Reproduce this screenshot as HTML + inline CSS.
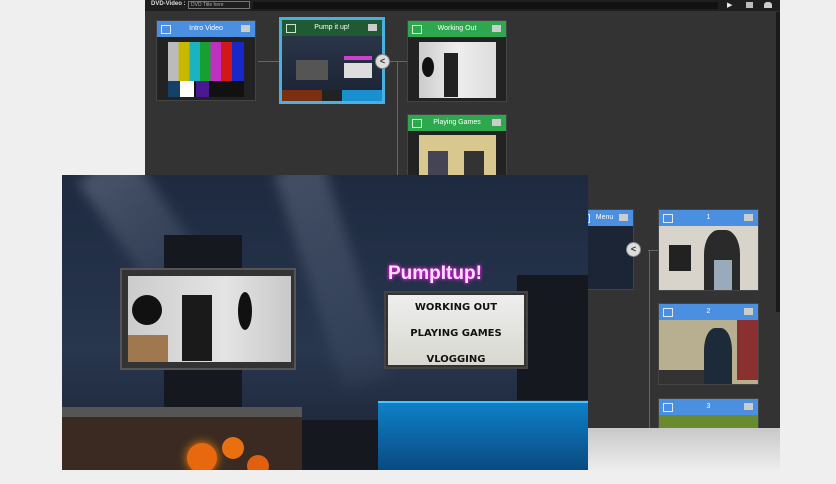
<!DOCTYPE html><html><head><style>
*{margin:0;padding:0;box-sizing:border-box}
body{width:836px;height:484px;background:#efefef;position:relative;overflow:hidden;font-family:"Liberation Sans",sans-serif}
.a{position:absolute}
.node{position:absolute;background:#222;border:1px solid #444}
.hd{height:16px;color:#fff;font-size:7px;text-align:center;line-height:16px;position:relative}
.hd:before{content:"";position:absolute;left:4px;top:4px;width:8px;height:7px;border:1px solid #fff;opacity:.8}
.hd:after{content:"";position:absolute;right:5px;top:4px;width:9px;height:7px;background:#ccc}
.b{background:#4a8fe0}.g{background:#2ea84e}.dg{background:#1f5a33}
.chev{position:absolute;width:15px;height:15px;border-radius:50%;background:#ddd;border:1px solid #888;font-size:9px;font-weight:bold;text-align:center;line-height:13px;color:#333}
</style></head><body>
<div class="a" style="left:145px;top:0;width:635px;height:428px;background:#333"></div>
<div class="a" style="left:145px;top:0;width:635px;height:11px;background:#1e1e1e"></div>
<div class="a" style="left:151px;top:1px;color:#ddd;font-size:6px;font-weight:bold">DVD-Video :</div>
<div class="a" style="left:188px;top:1px;width:62px;height:8px;border:1px solid #777;color:#aaa;font-size:5px;padding-left:2px;line-height:7px">DVD Title here</div>
<div class="a" style="left:253px;top:2px;width:465px;height:7px;background:#111"></div>
<div class="a" style="left:727px;top:1px;color:#eee;font-size:7px">▶</div>
<div class="a" style="left:746px;top:2px;width:7px;height:6px;background:#bbb"></div>
<div class="a" style="left:764px;top:2px;width:8px;height:6px;background:#ccc;border-radius:3px 3px 0 0"></div>
<div class="a" style="left:776px;top:12px;width:4px;height:300px;background:#1a1a1a"></div>
<div class="a" style="left:258px;top:61px;width:22px;height:1px;background:#666"></div>
<div class="a" style="left:388px;top:61px;width:20px;height:1px;background:#666"></div>
<div class="a" style="left:397px;top:61px;width:1px;height:115px;background:#666"></div>
<div class="a" style="left:648px;top:250px;width:10px;height:1px;background:#666"></div>
<div class="a" style="left:649px;top:250px;width:1px;height:178px;background:#666"></div>
<div class="node" style="left:156px;top:20px;width:100px;height:81px"><div class="hd b">Intro Video</div>
<div class="a" style="left:11px;top:21px;width:76px;height:55px;background:linear-gradient(90deg,#bbb 0 14%,#c8b800 14% 28%,#1ab4c0 28% 42%,#16a030 42% 56%,#c030c0 56% 70%,#d01818 70% 84%,#1828c8 84%)"></div>
<div class="a" style="left:11px;top:60px;width:76px;height:16px;background:#111"></div>
<div class="a" style="left:23px;top:60px;width:14px;height:16px;background:#fff"></div>
<div class="a" style="left:11px;top:60px;width:12px;height:16px;background:#14406a"></div>
<div class="a" style="left:39px;top:60px;width:13px;height:16px;background:#4a1890"></div></div>
<div class="node" style="left:279px;top:17px;width:106px;height:87px;border:3px solid #4ab0e0"><div class="hd dg">Pump it up!</div>
<div class="a" style="left:0;top:16px;width:100px;height:65px;background:linear-gradient(#2a3548,#1b2333)"></div>
<div class="a" style="left:14px;top:40px;width:32px;height:20px;background:#555"></div>
<div class="a" style="left:62px;top:36px;width:28px;height:4px;background:#d040d0"></div>
<div class="a" style="left:62px;top:43px;width:28px;height:15px;background:#ddd"></div>
<div class="a" style="left:0;top:70px;width:100px;height:11px;background:linear-gradient(90deg,#7a3010 0 40%,#222 40% 60%,#1890d0 60%)"></div></div>
<div class="chev" style="left:375px;top:54px">&lt;</div>
<div class="node" style="left:407px;top:20px;width:100px;height:82px"><div class="hd g">Working Out</div>
<div class="a" style="left:11px;top:21px;width:77px;height:56px;background:linear-gradient(90deg,#ccc,#eee 50%,#ddd)"></div>
<div class="a" style="left:36px;top:32px;width:14px;height:44px;background:#222"></div>
<div class="a" style="left:14px;top:36px;width:12px;height:20px;background:#111;border-radius:50%"></div></div>
<div class="node" style="left:407px;top:114px;width:100px;height:62px"><div class="hd g">Playing Games</div>
<div class="a" style="left:11px;top:20px;width:77px;height:42px;background:#d8c890"></div>
<div class="a" style="left:20px;top:36px;width:20px;height:26px;background:#445"></div>
<div class="a" style="left:56px;top:36px;width:20px;height:26px;background:#333"></div></div>
<div class="node" style="left:575px;top:209px;width:59px;height:81px"><div class="hd b">Menu</div>
<div class="a" style="left:0;top:16px;width:57px;height:63px;background:#1c2535"></div></div>
<div class="chev" style="left:626px;top:242px">&lt;</div>
<div class="node" style="left:658px;top:209px;width:101px;height:82px"><div class="hd b">1</div>
<div class="a" style="left:0;top:16px;width:99px;height:64px;background:#d8d4cc"></div>
<div class="a" style="left:10px;top:35px;width:22px;height:26px;background:#222"></div>
<div class="a" style="left:45px;top:20px;width:36px;height:60px;background:#2a2a2a;border-radius:40% 40% 0 0"></div>
<div class="a" style="left:55px;top:50px;width:18px;height:30px;background:#9ab"></div></div>
<div class="node" style="left:658px;top:303px;width:101px;height:82px"><div class="hd b">2</div>
<div class="a" style="left:0;top:16px;width:99px;height:64px;background:#b8ae90"></div>
<div class="a" style="left:78px;top:16px;width:21px;height:60px;background:#8a3030"></div>
<div class="a" style="left:0;top:66px;width:50px;height:14px;background:#333"></div>
<div class="a" style="left:45px;top:24px;width:28px;height:56px;background:#1c2a3a;border-radius:40% 40% 0 0"></div></div>
<div class="node" style="left:658px;top:398px;width:101px;height:30px"><div class="hd b">3</div>
<div class="a" style="left:0;top:16px;width:99px;height:14px;background:#6a8a30"></div></div>
<div class="a" style="left:588px;top:428px;width:192px;height:44px;background:linear-gradient(#c8c8c8,#efefef)"></div>
<div class="a" style="left:62px;top:175px;width:526px;height:295px;background:linear-gradient(#1d2a40,#28364e 60%,#1a2232);overflow:hidden">
<div class="a" style="left:10px;top:-10px;width:60px;height:150px;background:linear-gradient(rgba(200,210,230,.25),rgba(200,210,230,.05));filter:blur(6px);transform:rotate(-35deg);transform-origin:top"></div>
<div class="a" style="left:210px;top:-10px;width:50px;height:230px;background:linear-gradient(rgba(200,210,230,.22),rgba(200,210,230,.04));filter:blur(6px);transform:rotate(-18deg);transform-origin:top"></div>
<div class="a" style="left:102px;top:60px;width:78px;height:180px;background:#15181e"></div>
<div class="a" style="left:58px;top:93px;width:176px;height:102px;background:#333;border:2px solid #555"></div>
<div class="a" style="left:66px;top:101px;width:163px;height:86px;background:linear-gradient(90deg,#ccc,#e4e4e4 60%,#c8c8c8)"></div>
<div class="a" style="left:120px;top:120px;width:30px;height:66px;background:#1a1a1a"></div>
<div class="a" style="left:70px;top:120px;width:30px;height:30px;border-radius:50%;background:#111"></div>
<div class="a" style="left:176px;top:117px;width:14px;height:38px;border-radius:50%;background:#111"></div>
<div class="a" style="left:66px;top:160px;width:40px;height:27px;background:#a07850"></div>
<div class="a" style="left:0;top:240px;width:240px;height:55px;background:#3a2a22"></div>
<div class="a" style="left:0;top:232px;width:240px;height:10px;background:#555"></div>
<div class="a" style="left:125px;top:268px;width:30px;height:30px;border-radius:50%;background:#e86810;box-shadow:0 0 10px #f80"></div>
<div class="a" style="left:160px;top:262px;width:22px;height:22px;border-radius:50%;background:#e87010"></div>
<div class="a" style="left:185px;top:280px;width:22px;height:22px;border-radius:50%;background:#e06010"></div>
<div class="a" style="left:455px;top:100px;width:71px;height:125px;background:#15181e"></div>
<div class="a" style="left:240px;top:245px;width:80px;height:50px;background:#15181e"></div>
<div class="a" style="left:326px;top:88px;color:#ffe0ff;font-size:19px;font-weight:bold;text-shadow:0 0 4px #e020e0,0 0 3px #e020e0">PumpItup!</div>
<div class="a" style="left:322px;top:116px;width:144px;height:78px;background:#333;border:2px solid #444"></div>
<div class="a" style="left:326px;top:120px;width:136px;height:70px;background:linear-gradient(#eee,#d8d8d0);font-family:'DejaVu Sans',sans-serif;font-weight:bold;font-size:10px;color:#111;text-align:center;line-height:26px">WORKING OUT<br>PLAYING GAMES<br>VLOGGING</div>
<div class="a" style="left:316px;top:226px;width:210px;height:69px;background:linear-gradient(#0e80c8,#0a4a80);border-top:2px solid #40c8ff"></div>
</div>
</body></html>
